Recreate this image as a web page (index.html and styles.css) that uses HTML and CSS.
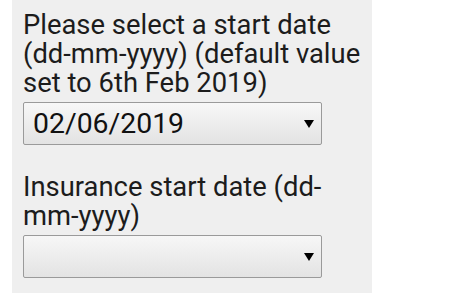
FILE: index.html
```html
<!DOCTYPE html>
<html>
<head>
<meta charset="utf-8">
<link rel="stylesheet" href="styles.css">
</head>
<body>
<div class="panel">
  <label class="label">Please select a start date (dd-mm-yyyy) (default value set to 6th Feb 2019)</label>
  <div class="select">
    <span class="value">02/06/2019</span>
    <svg class="arrow" width="10" height="8" viewBox="0 0 10 8"><polygon points="0,0 10,0 5,8" fill="#000"/></svg>
  </div>
  <label class="label second">Insurance start date (dd-mm-yyyy)</label>
  <div class="select">
    <span class="value"></span>
    <svg class="arrow" width="10" height="8" viewBox="0 0 10 8"><polygon points="0,0 10,0 5,8" fill="#000"/></svg>
  </div>
</div>
</body>
</html>
```

FILE: styles.css
```css
html, body {
  margin: 0;
  padding: 0;
  background: #ffffff;
}
body {
  font-family: Roboto, "Noto Sans", sans-serif;
  color: #1c1c1c;
}
.panel {
  margin-left: 12px;
  width: 360px;
  box-sizing: border-box;
  padding: 11px 6px 15px 11px;
  background: #efefef;
  display: flex;
  flex-direction: column;
  align-items: flex-start;
}
.label {
  display: block;
  font-size: 27.4px;
  line-height: 29px;
}
.label.second {
  margin-top: 28px;
}
.select {
  margin-top: 4px;
  width: 299px;
  height: 43px;
  box-sizing: border-box;
  border: 1px solid #9a9a9a;
  border-radius: 2px;
  background: linear-gradient(#f7f7f7, #e3e3e3);
  display: flex;
  align-items: center;
  justify-content: space-between;
  padding: 0 7px 0 9px;
}
.value {
  font-size: 28.4px;
  color: #111;
}
.arrow {
  display: block;
  margin-top: 1px;
}
```
